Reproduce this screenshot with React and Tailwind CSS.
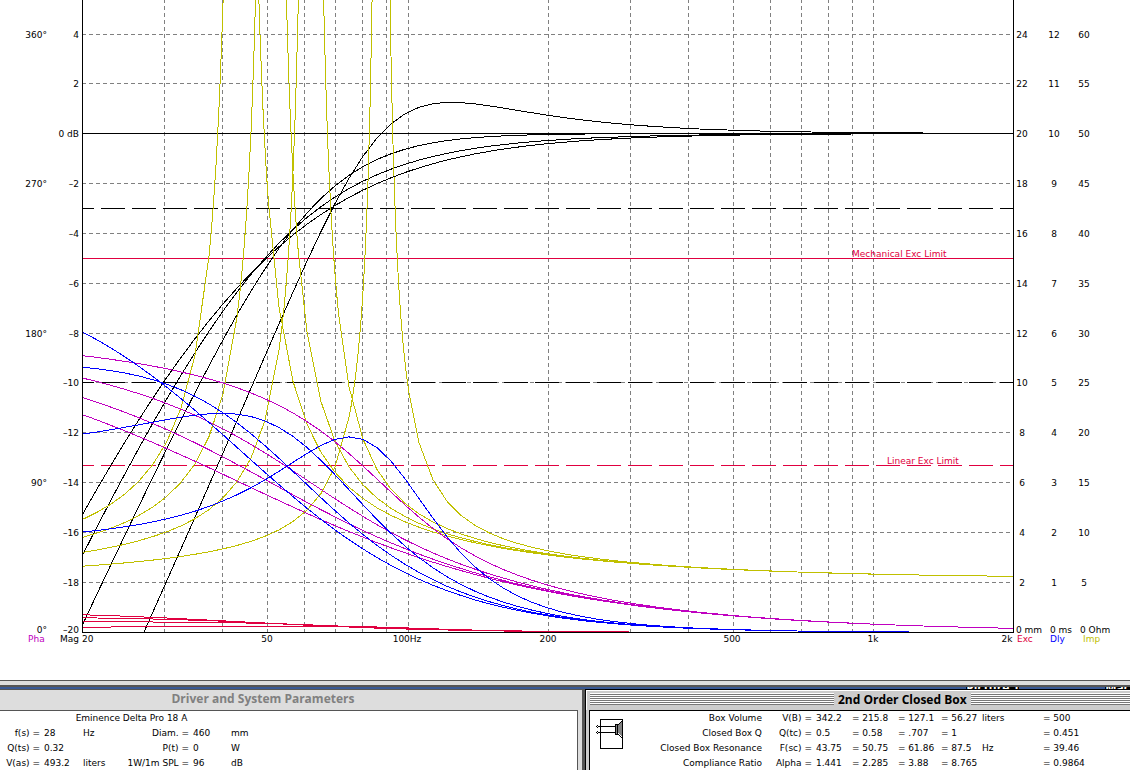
const LEFT = 82.8;
const BASE = 632.5;
const PER_DB = 24.95;
const PER_OCTAVE = 140.07;

const BOXES = [
  { fc: 43.75, q: 0.5 },
  { fc: 50.75, q: 0.58 },
  { fc: 61.86, q: 0.707 },
  { fc: 87.5, q: 1 },
];

const xOf = (f) => LEFT + PER_OCTAVE * Math.log2(f / 20);
const yOf = (steps) => BASE - steps * PER_DB;
const denom = (x, q) => Math.hypot(1 - x * x, x / q);

// Every model returns a height in plot steps (one step is 1 dB, 1 mm, 0.5 ms, 2.5 ohm or 15 degrees).
const magnitude = ({ fc, q }) => (f) => {
  const x = f / fc;
  return 20 + 20 * Math.log10((x * x) / denom(x, q));
};
const phase = ({ fc, q }) => (f) => {
  const x = f / fc;
  return (180 - (Math.atan2(x / q, 1 - x * x) * 180) / Math.PI) / 15;
};
const delay = ({ fc, q }) => (f) => {
  const x = f / fc;
  return (2000 / (q * 2 * Math.PI * fc)) * ((1 + x * x) / denom(x, q) ** 2);
};
const impedance = ({ fc, q }) => (f) => {
  const x = f / fc;
  return (5.4 * (1 + x / (q * 1.05) / Math.hypot(1 - x * x, x / 200))) / 2.5;
};
const excursion = ({ fc, q }) => (f) =>
  (0.86 * (43.75 / fc) ** 2) / denom(f / fc, q);

function trace(model, fc) {
  const points = [];
  for (let i = 0; i <= 536; i++) {
    const f = 20 * 2 ** (i / 80);
    const nearPeak = fc && Math.abs(f / fc - 1) < 0.15;
    if (i % 8 === 0 || nearPeak) {
      const y = Math.max(-900, yOf(model(f)));
      points.push(`${xOf(f).toFixed(1)},${y.toFixed(1)}`);
    }
  }
  return points.join(" ");
}

const GRID_FREQS = [30, 40, 50, 60, 70, 80, 90, 100, 200, 300, 400, 500, 600, 700, 800, 900, 1000];
const ROWS = [4, 2, 0, -2, -4, -6, -8, -10, -12, -14, -16, -18];
const ROW_Y = [34, 83, 133, 183, 233, 283, 333, 382, 432, 482, 532, 582];
const rowY = (db) => ROW_Y[ROWS.indexOf(db)] + 0.5;

function Curves({ model, color, peaked }) {
  return BOXES.map((box) => (
    <polyline
      key={box.fc}
      points={trace(model(box), peaked && box.fc)}
      fill="none"
      stroke={color}
    />
  ));
}

function Chart() {
  return (
    <svg
      viewBox="0 0 1130 680"
      className="block h-auto w-full shrink-0 bg-white"
      role="img"
      aria-label="Closed box response"
      fontSize="9"
    >
      <defs>
        <clipPath id="plot">
          <rect x="82" y="0" width="932" height="632" />
        </clipPath>
      </defs>
      <g shapeRendering="crispEdges" clipPath="url(#plot)">
        <g stroke="#808080" strokeDasharray="4 3">
          {ROWS.filter((db) => db !== 0).map((db) => (
            <line key={db} x1="82" x2="1013" y1={rowY(db)} y2={rowY(db)} />
          ))}
          {GRID_FREQS.map((f) => {
            const x = Math.floor(xOf(f)) + 0.5;
            return <line key={f} x1={x} x2={x} y1="0" y2="632" strokeDashoffset="1" />;
          })}
        </g>
        <line x1="82" x2="1013" y1="133.5" y2="133.5" stroke="#000" />
        <g strokeDasharray="24 7" strokeDashoffset="12">
          <line x1="82" x2="1013" y1="208.5" y2="208.5" stroke="#000" />
          <line x1="82" x2="1013" y1="382.5" y2="382.5" stroke="#000" />
          <line x1="82" x2="1013" y1="465.5" y2="465.5" stroke="#e00040" />
        </g>
        <line x1="82" x2="1013" y1="258.5" y2="258.5" stroke="#e00040" />
        <Curves model={magnitude} color="#000000" />
        <Curves model={excursion} color="#e00040" />
        <Curves model={impedance} color="#c0c000" peaked />
        <Curves model={phase} color="#c000c0" />
        <Curves model={delay} color="#0000ff" />
      </g>
      <g shapeRendering="crispEdges" stroke="#000">
        <line x1="82.5" x2="82.5" y1="0" y2="633" />
        <line x1="1013.5" x2="1013.5" y1="0" y2="633" />
        <line x1="82" x2="1014" y1="632.5" y2="632.5" />
      </g>

      <g fill="#e00040">
        <text x="852" y="257">Mechanical Exc Limit</text>
        <text x="887" y="464">Linear Exc Limit</text>
      </g>

      <g textAnchor="end">
        {[360, 270, 180, 90].map((deg, i) => (
          <text key={deg} x="47" y={rowY(4 - 6 * i) + 3.5}>{deg}°</text>
        ))}
        <text x="47" y="633">0°</text>
        {ROWS.map((db) => (
          <text key={db} x="79" y={rowY(db) + 3.5}>{db === 0 ? "0 dB" : String(db).replace("-", "–")}</text>
        ))}
        <text x="79" y="633">–20</text>
      </g>

      <g textAnchor="middle">
        {ROWS.map((db) => (
          <g key={db}>
            <text x="1022" y={rowY(db) + 3.5}>{db + 20}</text>
            <text x="1054" y={rowY(db) + 3.5}>{(db + 20) / 2}</text>
            <text x="1084" y={rowY(db) + 3.5}>{(db + 20) * 2.5}</text>
          </g>
        ))}
        <text x="267" y="642">50</text>
        <text x="407" y="642">100Hz</text>
        <text x="548" y="642">200</text>
        <text x="732" y="642">500</text>
        <text x="873" y="642">1k</text>
        <text x="1007" y="642">2k</text>
      </g>

      <text x="1016" y="633">0 mm</text>
      <text x="1050" y="633">0 ms</text>
      <text x="1080" y="633">0 Ohm</text>
      <text x="28" y="642" fill="#c000c0">Pha</text>
      <text x="60" y="642">Mag</text>
      <text x="82" y="642">20</text>
      <text x="1017" y="642" fill="#e00040">Exc</text>
      <text x="1050" y="642" fill="#0000ff">Dly</text>
      <text x="1083" y="642" fill="#c0c000">Imp</text>
    </svg>
  );
}

function SpeakerIcon() {
  return (
    <svg width="27" height="30" viewBox="0 0 27 30" shapeRendering="crispEdges" aria-hidden="true">
      <rect x="4.5" y="0.5" width="22" height="29" fill="#fff" stroke="#000" />
      <path d="M2 7.5H19M2 13.5H19" stroke="#000" />
      <path d="M1 6h1v1h-1zM0 7h1v1h-1zM2 7h1v1h-1zM1 8h1v1h-1zM1 12h1v1h-1zM0 13h1v1h-1zM2 13h1v1h-1zM1 14h1v1h-1z" fill="#000" />
      <path d="M22 6L26 2V18L22 14Z" fill="#808080" />
      <rect x="19.5" y="5.5" width="2" height="10" fill="#808080" stroke="#000" />
      <path d="M22.5 6V5M23.5 5V4M24.5 4V3M25.5 3V2M22.5 15v1M23.5 16v1M24.5 17v1M25.5 18v1" fill="none" stroke="#000" />
    </svg>
  );
}

const DRIVER = [
  ["f(s) =", "28", "Hz", "Diam. =", "460", "mm"],
  ["Q(ts) =", "0.32", "", "P(t) =", "0", "W"],
  ["V(as) =", "493.2", "liters", "1W/1m SPL =", "96", "dB"],
];

const SYSTEM = [
  ["Box Volume", "V(B) =", "342.2", "215.8", "127.1", "56.27", "liters", "500"],
  ["Closed Box Q", "Q(tc) =", "0.5", "0.58", ".707", "1", "", "0.451"],
  ["Closed Box Resonance", "F(sc) =", "43.75", "50.75", "61.86", "87.5", "Hz", "39.46"],
  ["Compliance Ratio", "Alpha =", "1.441", "2.285", "3.88", "8.765", "", "0.9864"],
];

function DriverWindow() {
  return (
    <section className="flex min-w-0 flex-[584] flex-col border-t border-r-[3px] border-[#555] bg-[#ddd]">
      <h2 className="h-5 shrink-0 truncate pr-14 text-center font-['Open_Sans',sans-serif] text-xs leading-[18px] font-bold text-[#808080]">
        Driver and System Parameters
      </h2>
      <div className="mr-1 flex-1 border-t border-r border-[#555] bg-white">
        <table className="table-fixed border-collapse whitespace-nowrap">
          <colgroup>
            <col className="w-10" />
            <col className="w-[43px]" />
            <col className="w-8" />
            <col className="w-[74px]" />
            <col className="w-[42px]" />
            <col className="w-8" />
          </colgroup>
          <thead>
            <tr>
              <th colSpan={6} className="p-0 text-center font-normal">Eminence Delta Pro 18 A</th>
            </tr>
          </thead>
          <tbody>
            {DRIVER.map(([a, b, c, d, e, f]) => (
              <tr key={a}>
                <th className="p-0 text-right font-normal">{a}</th>
                <td className="py-0 pr-0 pl-1">{b}</td>
                <td className="p-0">{c}</td>
                <th className="p-0 text-right font-normal">{d}</th>
                <td className="py-0 pr-0 pl-1">{e}</td>
                <td className="p-0">{f}</td>
              </tr>
            ))}
          </tbody>
        </table>
      </div>
    </section>
  );
}

const STRIPES =
  "h-3 bg-[repeating-linear-gradient(to_bottom,#fff_0px,#fff_1px,#777_1px,#777_2px)]";

function BoxWindow() {
  return (
    <section className="flex min-w-0 flex-[546] flex-col border-t border-l border-black bg-[#ccc]">
      <div className="flex h-5 shrink-0 items-start gap-1 border-t border-l border-white pl-[3px]">
        <div className={`mt-0.5 w-[244px] shrink-0 ${STRIPES}`} />
        <h2 className="shrink-0 font-['Open_Sans',sans-serif] text-xs leading-[17px] font-bold text-black">2nd Order Closed Box</h2>
        <div className={`mt-0.5 flex-1 ${STRIPES}`} />
      </div>
      <div className="ml-[3px] flex flex-1 items-start border-t border-l border-black bg-white">
        <div className="w-[60px] shrink-0 pt-2 pl-1.5">
          <SpeakerIcon />
        </div>
        <table className="table-fixed border-collapse whitespace-nowrap">
          <colgroup>
            <col className="w-[112px]" />
            <col className="w-[50px]" />
            <col className="w-10" />
            <col className="w-[46px]" />
            <col className="w-[43px]" />
            <col className="w-[41px]" />
            <col className="w-[61px]" />
            <col className="w-[60px]" />
          </colgroup>
          <tbody>
            {SYSTEM.map(([label, symbol, v1, v2, v3, v4, unit, v5]) => (
              <tr key={label}>
                <th className="p-0 text-right font-normal">{label}</th>
                <th className="p-0 text-right font-normal">{symbol}</th>
                <td className="py-0 pr-0 pl-1">{v1}</td>
                <td className="p-0">= {v2}</td>
                <td className="p-0">= {v3}</td>
                <td className="p-0">= {v4}</td>
                <td className="p-0">{unit}</td>
                <td className="p-0">= {v5}</td>
              </tr>
            ))}
          </tbody>
        </table>
      </div>
    </section>
  );
}

function DesktopStrip() {
  return (
    <div className="flex h-0.5 shrink-0 items-center justify-end gap-[86px] overflow-hidden bg-[#3a5a96] font-['Open_Sans',sans-serif] text-xs leading-3 font-bold text-white">
      <span className="bg-black">Picture 1</span>
      <span className="bg-black">Mac</span>
    </div>
  );
}

export default function App() {
  return (
    <main className="flex h-screen flex-col overflow-hidden bg-white font-['DejaVu_Sans',sans-serif] text-[9px] leading-[15px] text-black">
      <Chart />
      <div className="h-[7px] shrink-0 border-t border-b-2 border-[#555] bg-[#ddd]" />
      <DesktopStrip />
      <div className="flex min-h-0 flex-1">
        <DriverWindow />
        <BoxWindow />
      </div>
    </main>
  );
}
